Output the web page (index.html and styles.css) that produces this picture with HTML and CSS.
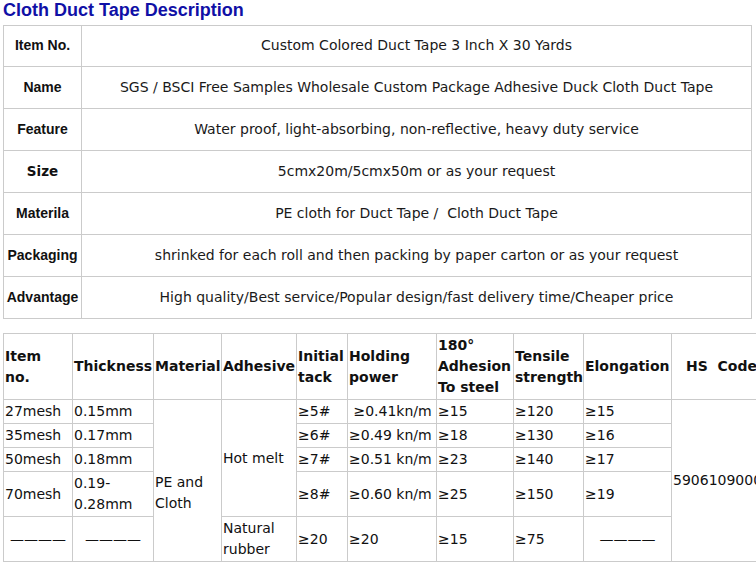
FILE: index.html
```html
<!DOCTYPE html>
<html lang="en">
<head>
<meta charset="utf-8">
<title>Cloth Duct Tape Description</title>
<link rel="stylesheet" href="styles.css">
</head>
<body>
<div class="page">
  <h2 class="title">Cloth Duct Tape Description</h2>

  <table class="desc">
    <colgroup><col class="c-label"><col></colgroup>
    <tr class="first"><th>Item No.</th><td>Custom Colored Duct Tape 3 Inch X 30 Yards</td></tr>
    <tr><th>Name</th><td>SGS / BSCI Free Samples Wholesale Custom Package Adhesive Duck Cloth Duct Tape</td></tr>
    <tr><th>Feature</th><td>Water proof, light-absorbing, non-reflective, heavy duty service</td></tr>
    <tr><th class="size">Size</th><td>5cmx20m/5cmx50m or as your request</td></tr>
    <tr><th>Materila</th><td>PE cloth for Duct Tape /&nbsp; Cloth Duct Tape</td></tr>
    <tr><th>Packaging</th><td>shrinked for each roll and then packing by paper carton or as your request</td></tr>
    <tr><th>Advantage</th><td>High quality/Best service/Popular design/fast delivery time/Cheaper price</td></tr>
  </table>

  <table class="spec">
    <colgroup>
      <col class="w1"><col class="w2"><col class="w3"><col class="w4"><col class="w5">
      <col class="w6"><col class="w7"><col class="w8"><col class="w9"><col class="w10">
    </colgroup>
    <tr class="head">
      <th>Item<br>no.</th>
      <th>Thickness</th>
      <th>Material</th>
      <th>Adhesive</th>
      <th>Initial<br>tack</th>
      <th>Holding<br>power</th>
      <th>180&deg;<br>Adhesion<br>To steel</th>
      <th>Tensile<br>strength</th>
      <th>Elongation</th>
      <th class="center">HS&nbsp; Code</th>
    </tr>
    <tr>
      <td>27mesh</td>
      <td>0.15mm</td>
      <td rowspan="5" class="material">PE and<br>Cloth</td>
      <td rowspan="4">Hot melt</td>
      <td>&ge;5#</td>
      <td>&nbsp;&ge;0.41kn/m</td>
      <td>&ge;15</td>
      <td>&ge;120</td>
      <td>&ge;15</td>
      <td rowspan="5" class="hs">5906109000</td>
    </tr>
    <tr>
      <td>35mesh</td>
      <td>0.17mm</td>
      <td>&ge;6#</td>
      <td>&ge;0.49 kn/m</td>
      <td>&ge;18</td>
      <td>&ge;130</td>
      <td>&ge;16</td>
    </tr>
    <tr>
      <td>50mesh</td>
      <td>0.18mm</td>
      <td>&ge;7#</td>
      <td>&ge;0.51 kn/m</td>
      <td>&ge;23</td>
      <td>&ge;140</td>
      <td>&ge;17</td>
    </tr>
    <tr>
      <td>70mesh</td>
      <td>0.19-<br>0.28mm</td>
      <td>&ge;8#</td>
      <td>&ge;0.60 kn/m</td>
      <td>&ge;25</td>
      <td>&ge;150</td>
      <td>&ge;19</td>
    </tr>
    <tr>
      <td class="center">————</td>
      <td class="center">————</td>
      <td>Natural<br>rubber</td>
      <td>&ge;20</td>
      <td>&ge;20</td>
      <td>&ge;15</td>
      <td>&ge;75</td>
      <td class="center">————</td>
    </tr>
  </table>
</div>
</body>
</html>
```

FILE: styles.css
```css
html, body {
  margin: 0;
  padding: 0;
  overflow: hidden;
  background: #fff;
}

.page {
  padding: 0 3px;
  font-family: "DejaVu Sans", Verdana, sans-serif;
  color: #111;
}

.title {
  margin: 0 0 4px 0;
  font-family: "Liberation Sans", Arial, sans-serif;
  font-size: 18px;
  line-height: 21px;
  font-weight: bold;
  color: #1010a6;
}

/* Description table */
.desc {
  width: 749px;
  border-collapse: collapse;
  table-layout: fixed;
}
.desc .c-label { width: 78px; }

.desc th,
.desc td {
  border: 1px solid #cbcbcb;
  padding: 10px 1px;
  line-height: 21px;
  text-align: center;
  vertical-align: middle;
}
.desc .first th,
.desc .first td {
  padding-top: 9px;
}
.desc th {
  font-family: "Liberation Sans", Arial, sans-serif;
  font-weight: bold;
  font-size: 14px;
  color: #111;
}
.desc th.size {
  font-family: "DejaVu Sans", Verdana, sans-serif;
  font-size: 13.5px;
}
.desc td {
  font-size: 14px;
  color: #1a1a1a;
}

/* Spec table */
.spec {
  margin-top: 14px;
  border-collapse: collapse;
  table-layout: fixed;
  width: 768px;
  font-size: 14px;
  line-height: 21px;
}
.spec .w1 { width: 69px; }
.spec .w2 { width: 81px; }
.spec .w3 { width: 68px; }
.spec .w4 { width: 75px; }
.spec .w5 { width: 51px; }
.spec .w6 { width: 89px; }
.spec .w7 { width: 77px; }
.spec .w8 { width: 70px; }
.spec .w9 { width: 88px; }
.spec .w10 { width: 100px; }

.spec th,
.spec td {
  border: 1px solid #cbcbcb;
  padding: 1px 1px;
  text-align: left;
  vertical-align: middle;
  white-space: nowrap;
  color: #111;
}
.spec th {
  font-weight: bold;
}
.spec .center { text-align: center; }
.spec td.material { padding-top: 25px; }
.spec td.hs { overflow: hidden; }
```
